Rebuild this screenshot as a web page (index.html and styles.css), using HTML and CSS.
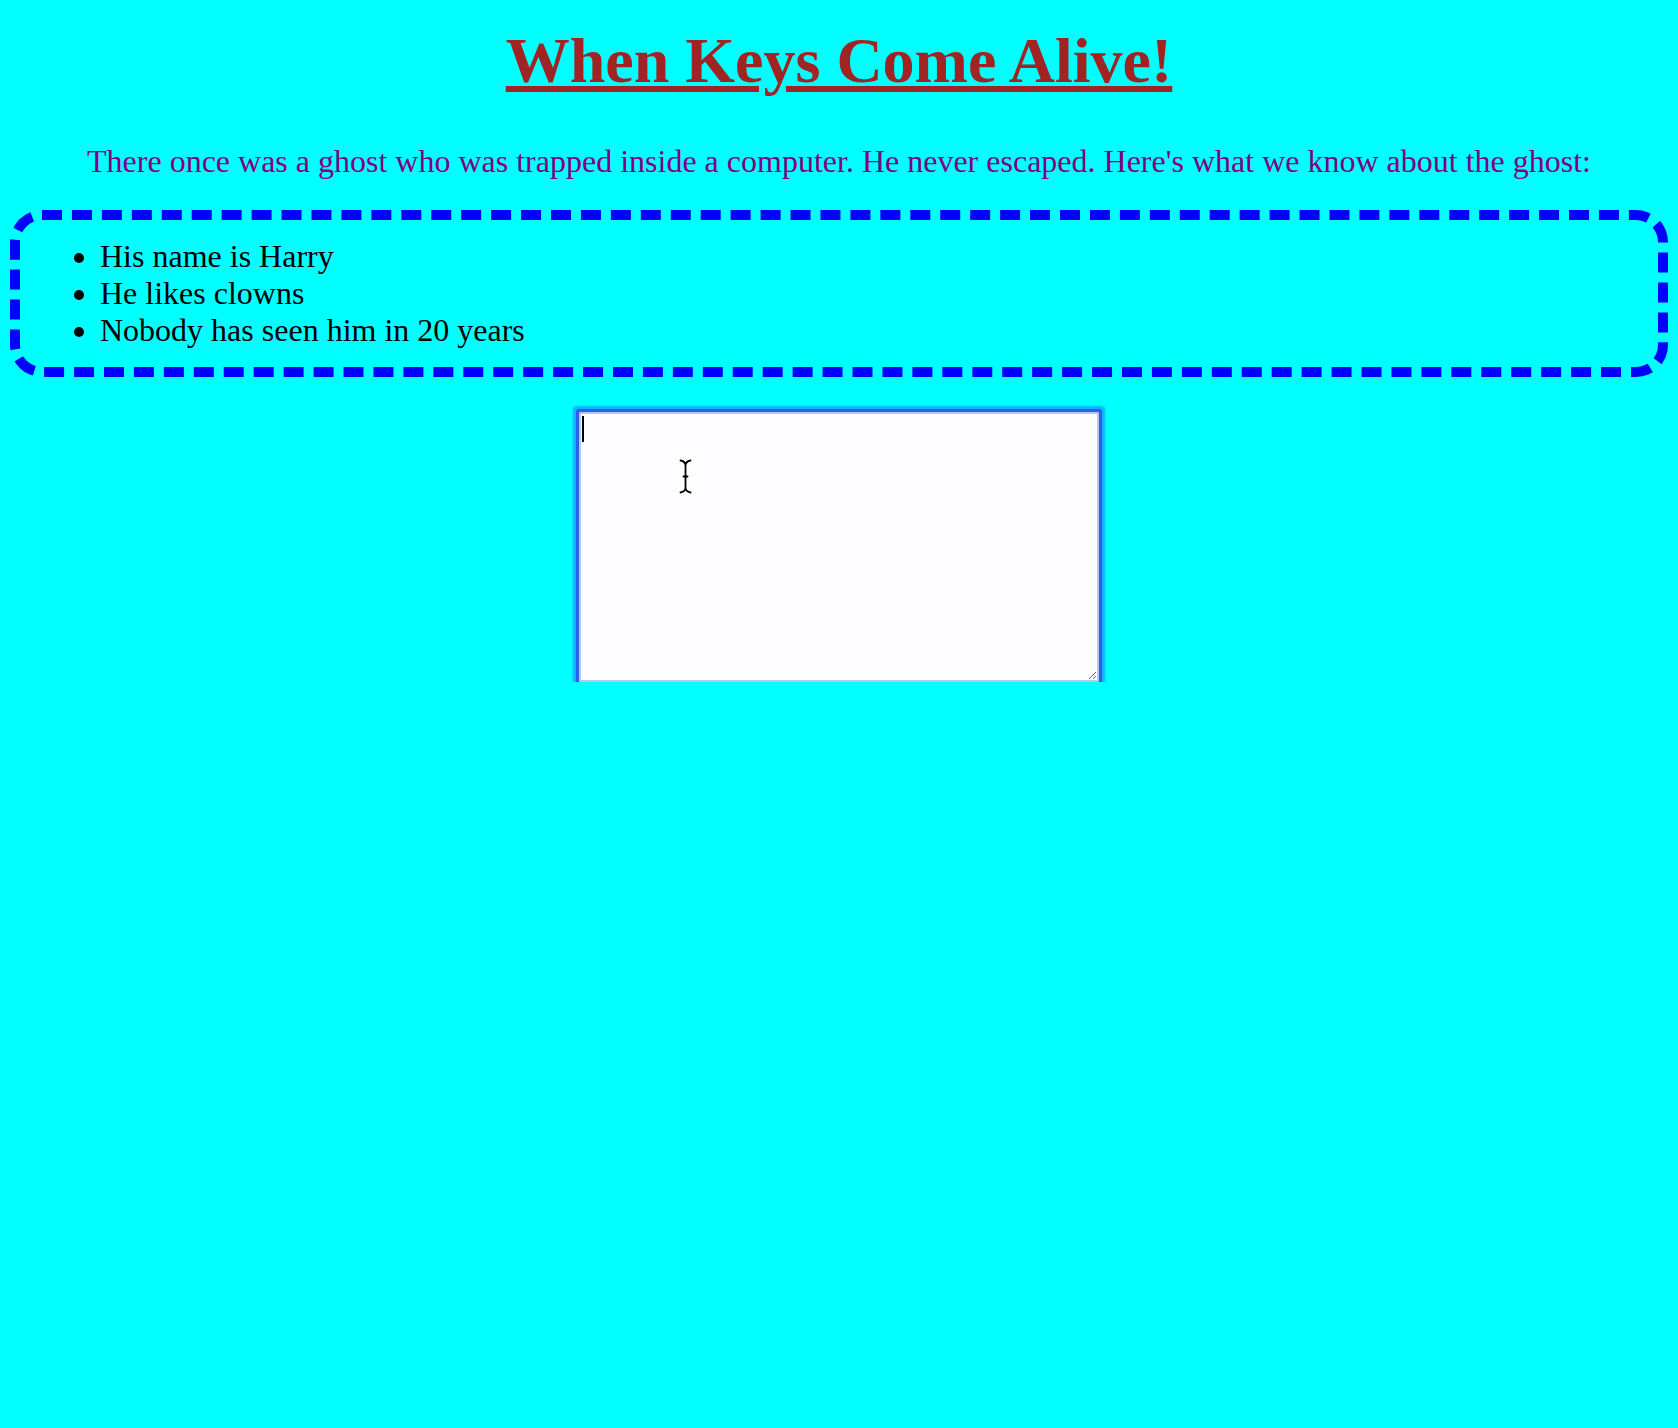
FILE: index.html
```html
<!DOCTYPE html>
<html lang="en">
<head>
<meta charset="utf-8">
<title>When Keys Come Alive!</title>
<link rel="stylesheet" href="styles.css">
</head>
<body>
<h1 class="title">When Keys Come Alive!</h1>
<p class="intro">There once was a ghost who was trapped inside a computer. He never escaped. Here's what we know about the ghost:</p>
<ul class="facts">
  <li>His name is Harry</li>
  <li>He likes clowns</li>
  <li>Nobody has seen him in 20 years</li>
</ul>
<div class="editor">
  <textarea class="editor-area" aria-label="Notes"></textarea>
  <span class="caret"></span>
  <svg class="ibeam" width="13" height="35" viewBox="0 0 13 35" aria-hidden="true">
    <path d="M1.5 1.5 Q6.5 2.5 6.5 6.5 Q6.5 2.5 11.5 1.5 M6.5 6.5 V28.5 M1.5 33.5 Q6.5 32.5 6.5 28.5 Q6.5 32.5 11.5 33.5 M4.5 17.5 H8.5" fill="none" stroke="#fff" stroke-width="3.5" stroke-linecap="round"/>
    <path d="M1.5 1.5 Q6.5 2.5 6.5 6.5 Q6.5 2.5 11.5 1.5 M6.5 6.5 V28.5 M1.5 33.5 Q6.5 32.5 6.5 28.5 Q6.5 32.5 11.5 33.5 M4.5 17.5 H8.5" fill="none" stroke="#000" stroke-width="1.8" stroke-linecap="round"/>
  </svg>
</div>
</body>
</html>
```

FILE: styles.css
```css
html {
  background: #00ffff;
}

body {
  margin: 8px;
  background: #00ffff;
  font-family: "Liberation Serif", "Times New Roman", serif;
}

.title {
  margin: 16px 0 0;
  text-align: center;
  font-size: 64px;
  font-weight: bold;
  line-height: normal;
  color: #a02424;
  text-decoration: underline;
  text-decoration-thickness: 6px;
  text-underline-offset: 4px;
}

.intro {
  margin: 45px 0 30px;
  text-align: center;
  font-size: 32px;
  color: #800080;
}

.facts {
  margin: 0 2px 35px;
  padding: 18px 0 18px 80px;
  border: 10px dashed #0000ff;
  border-radius: 32px;
  font-size: 32px;
  color: #000;
  list-style: disc;
}

.editor {
  position: relative;
  width: 520px;
  height: 270px;
  margin: 0 auto;
}

.editor-area {
  display: block;
  box-sizing: border-box;
  width: 520px;
  height: 270px;
  margin: 0;
  padding: 2px;
  border: 2px solid #b4c6f2;
  border-radius: 1px;
  background: #fdfdff;
  box-shadow: 0 0 0 3px #2f5fe8, 0 0 2px 6px rgba(40, 110, 255, 0.55);
  outline: none;
  resize: both;
  font-family: "Liberation Mono", monospace;
  font-size: 16px;
}

.caret {
  position: absolute;
  left: 3px;
  top: 4px;
  width: 2px;
  height: 26px;
  background: #000;
}

.ibeam {
  position: absolute;
  left: 100px;
  top: 47px;
}
```
